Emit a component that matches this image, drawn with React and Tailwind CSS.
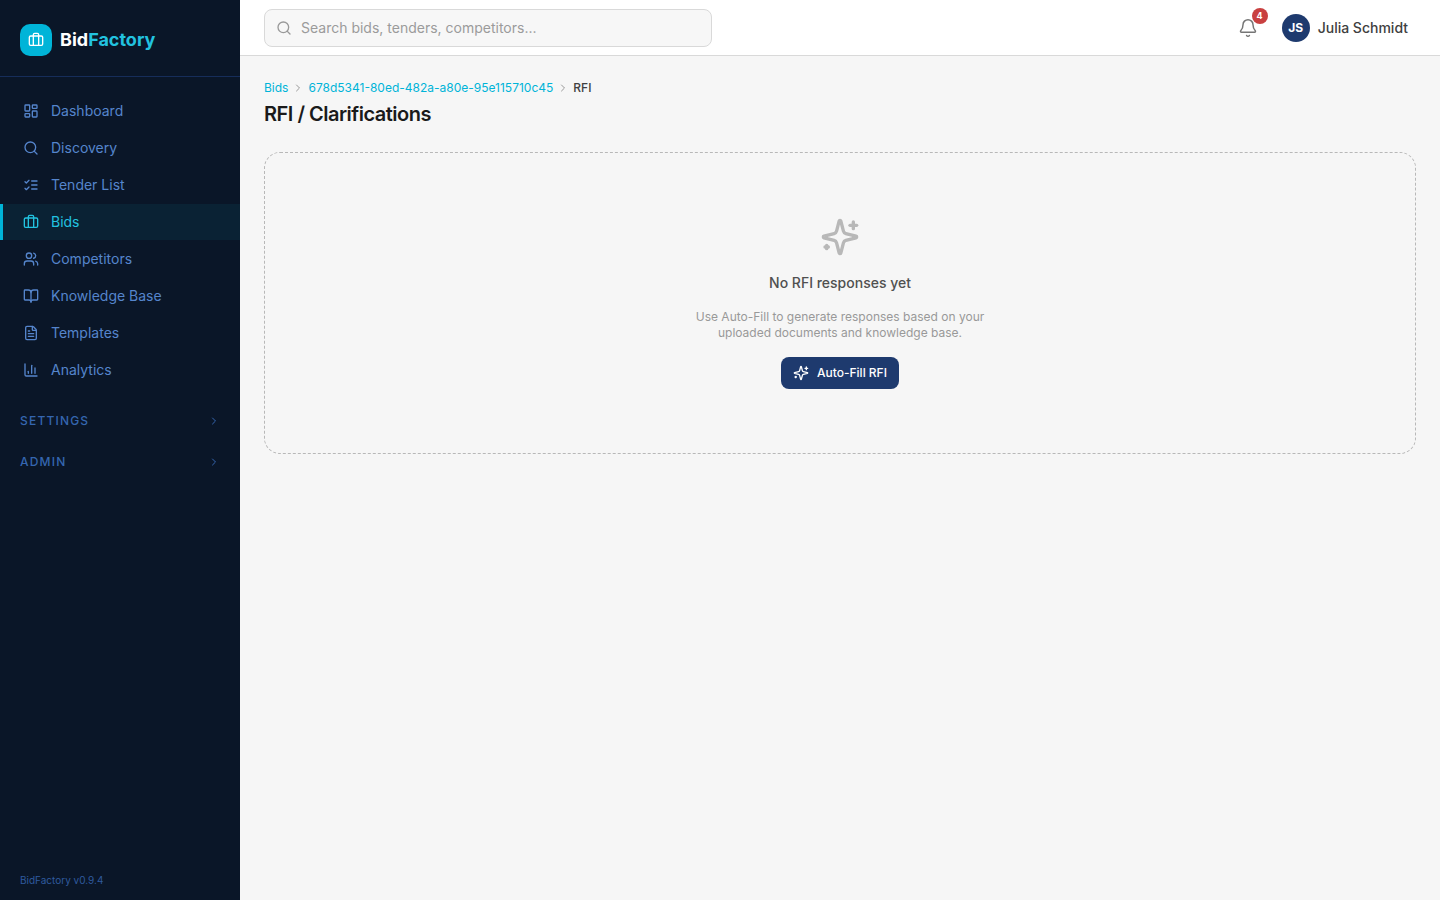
import { useState } from "react";
import {
  Bell,
  BookOpen,
  Briefcase,
  ChartColumn,
  ChevronRight,
  FileText,
  LayoutDashboard,
  Search,
  Users,
} from "lucide-react";

function IconBase({ className, children }) {
  return (
    <svg
      viewBox="0 0 24 24"
      fill="none"
      stroke="currentColor"
      strokeWidth="2"
      strokeLinecap="round"
      strokeLinejoin="round"
      aria-hidden="true"
      className={className}
    >
      {children}
    </svg>
  );
}

function SparklesIcon({ className }) {
  return (
    <IconBase className={className}>
      <path d="M9.937 15.5A2 2 0 0 0 8.5 14.063l-6.135-1.582a.5.5 0 0 1 0-.962L8.5 9.936A2 2 0 0 0 9.937 8.5l1.582-6.135a.5.5 0 0 1 .963 0L14.063 8.5A2 2 0 0 0 15.5 9.937l6.135 1.581a.5.5 0 0 1 0 .964L15.5 14.063a2 2 0 0 0-1.437 1.437l-1.582 6.135a.5.5 0 0 1-.963 0z" />
      <path d="M20 3v4" />
      <path d="M22 5h-4" />
      <path d="M4 17v2" />
      <path d="M5 18H3" />
    </IconBase>
  );
}

function TenderListIcon({ className }) {
  return (
    <IconBase className={className}>
      <path d="m3 17 2 2 4-4" />
      <path d="m3 7 2 2 4-4" />
      <path d="M13 6h8" />
      <path d="M13 12h8" />
      <path d="M13 18h8" />
    </IconBase>
  );
}

const navItems = [
  { label: "Dashboard", icon: LayoutDashboard },
  { label: "Discovery", icon: Search },
  { label: "Tender List", icon: TenderListIcon },
  { label: "Bids", icon: Briefcase },
  { label: "Competitors", icon: Users },
  { label: "Knowledge Base", icon: BookOpen },
  { label: "Templates", icon: FileText },
  { label: "Analytics", icon: ChartColumn },
];

function Sidebar() {
  const [active, setActive] = useState("Bids");

  return (
    <aside className="flex w-60 shrink-0 flex-col bg-[#0a1628]">
      <div className="flex items-center gap-2 border-b border-[#162d5a] px-5 pt-6 pb-5">
        <div className="flex size-8 items-center justify-center rounded-[10px] bg-[#00b4d8] text-white">
          <Briefcase className="size-4" />
        </div>
        <span className="text-lg font-bold text-white">
          Bid<span className="text-[#22c3e0]">Factory</span>
        </span>
      </div>

      <nav className="flex flex-1 flex-col pt-4">
        <ul className="flex flex-col gap-px">
          {navItems.map(({ label, icon: Icon }) => (
            <li key={label}>
              <a
                href="#"
                onClick={() => setActive(label)}
                aria-current={active === label ? "page" : undefined}
                className={`flex h-9 items-center gap-3 border-l-3 px-5 text-sm ${
                  active === label
                    ? "border-[#00b4d8] bg-[#0a2234] text-[#22c3e0]"
                    : "border-transparent text-[#5585cc] hover:bg-[#0f1f38]"
                }`}
              >
                <Icon className="size-4" />
                {label}
              </a>
            </li>
          ))}
        </ul>

        <div className="flex flex-col gap-2 pt-4">
          {["Settings", "Admin"].map((section) => (
            <button
              key={section}
              type="button"
              className="flex h-[33px] cursor-pointer items-center justify-between px-5 text-xs font-medium tracking-widest text-[#3566b0] uppercase"
            >
              {section}
              <ChevronRight className="size-3" />
            </button>
          ))}
        </div>
      </nav>

      <p className="px-5 pb-3 text-[10px] leading-4 text-[#2f5a9e]">BidFactory v0.9.4</p>
    </aside>
  );
}

function TopBar() {
  return (
    <header className="flex h-14 items-center justify-between border-b border-[#d9d9d9] bg-white pr-8 pl-6">
      <label className="flex h-[38px] w-full max-w-md items-center gap-[9px] rounded-lg border border-[#d9d9d9] bg-[#f7f7f7] pr-3 pl-[11px]">
        <Search className="size-4 shrink-0 text-[#999999]" />
        <input
          type="search"
          aria-label="Search"
          placeholder="Search bids, tenders, competitors..."
          className="w-full bg-transparent text-sm text-[#404040] outline-none placeholder:text-[#9b9b9b]"
        />
      </label>

      <div className="flex items-center gap-6">
        <button type="button" aria-label="Notifications" className="relative cursor-pointer text-[#757575]">
          <Bell className="size-5" strokeWidth={1.75} />
          <span className="absolute -top-2.5 -right-2.5 flex size-4 items-center justify-center rounded-full bg-[#c94040] text-[9px] font-bold text-white">
            4
          </span>
        </button>
        <button type="button" className="flex cursor-pointer items-center gap-2">
          <span className="flex size-7 items-center justify-center rounded-full bg-[#1e3a6e] text-xs font-bold text-white">
            JS
          </span>
          <span className="text-sm font-medium text-[#404040]">Julia Schmidt</span>
        </button>
      </div>
    </header>
  );
}

function Breadcrumbs() {
  return (
    <nav aria-label="Breadcrumb" className="flex items-center gap-1 text-xs">
      <a href="#" className="text-[#00b4d8] hover:underline">
        Bids
      </a>
      <ChevronRight className="size-3 text-[#999999]" />
      <a href="#" className="text-[#00b4d8] hover:underline">
        678d5341-80ed-482a-a80e-95e115710c45
      </a>
      <ChevronRight className="size-3 text-[#999999]" />
      <span className="font-medium text-[#404040]">RFI</span>
    </nav>
  );
}

export default function App() {
  return (
    <div className="flex min-h-screen bg-[#f6f6f6] font-['Inter',sans-serif]">
      <Sidebar />
      <div className="flex min-w-0 flex-1 flex-col">
        <TopBar />
        <main className="flex flex-col p-6">
          <Breadcrumbs />
          <h1 className="mt-1 text-xl font-semibold tracking-tight text-[#1a1a1a]">RFI / Clarifications</h1>

          <section className="mt-6 flex flex-col items-center rounded-2xl border border-dashed border-[#b8b8b8] py-16 text-center">
            <SparklesIcon className="size-10 text-[#b8b8b8]" />
            <h2 className="mt-4 text-sm font-medium text-[#505050]">No RFI responses yet</h2>
            <p className="mt-4 max-w-xs text-xs text-[#999999]">
              Use Auto-Fill to generate responses based on your uploaded documents and knowledge base.
            </p>
            <button
              type="button"
              className="mt-4 flex h-8 cursor-pointer items-center gap-2 rounded-lg bg-[#1e3a6e] px-3 text-xs font-medium text-white hover:bg-[#284a86]"
            >
              <SparklesIcon className="size-4" />
              Auto-Fill RFI
            </button>
          </section>
        </main>
      </div>
    </div>
  );
}
